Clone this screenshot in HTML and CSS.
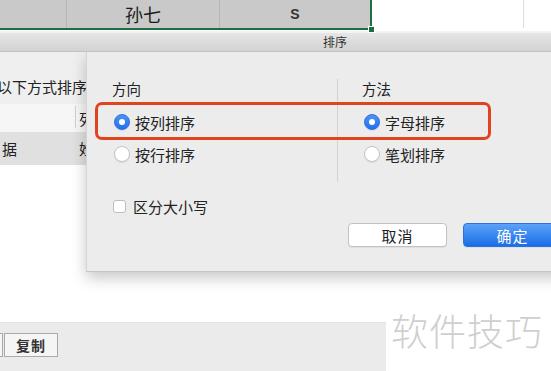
FILE: index.html
```html
<!DOCTYPE html>
<html lang="zh-CN">
<head>
  <meta charset="UTF-8">
  <title>排序</title>
  <link rel="stylesheet" href="styles.css">
</head>
<body>
  <div class="screen">
    <div class="sheet-row">
      <div class="selection">
        <div class="cell cell-a"></div>
        <div class="cell cell-b">孙七</div>
        <div class="cell cell-c">S</div>
        <span class="fill-handle"></span>
      </div>
      <div class="cell cell-d"></div>
      <div class="cell cell-e"></div>
    </div>
    <div class="strip"></div>
    <div class="titlebar">排序</div>

    <div class="window">
      <!-- Underlying Word dialog, mostly hidden by the sheet -->
      <div class="backdrop">
        <div class="prompt">以下方式排序文字</div>
        <div class="list-head">
          <div class="list-cell first"></div>
          <div class="list-cell">列</div>
        </div>
        <div class="list-row">
          <div class="list-cell first">据</div>
          <div class="list-cell">姓</div>
        </div>
        <div class="blank"></div>
        <div class="bottom-bar">
          <button class="small-btn prev"></button>
          <button class="small-btn">复制</button>
        </div>
      </div>

      <div class="sort-sheet">
        <div class="options">
          <div class="group group-left">
            <div class="group-title">方向</div>
            <label class="radio-row"><span class="radio checked"></span>按列排序</label>
            <label class="radio-row"><span class="radio"></span>按行排序</label>
          </div>
          <div class="group group-right">
            <div class="group-title">方法</div>
            <label class="radio-row"><span class="radio checked"></span>字母排序</label>
            <label class="radio-row"><span class="radio"></span>笔划排序</label>
          </div>
        </div>
        <label class="check-row"><span class="checkbox"></span>区分大小写</label>
        <div class="actions">
          <button class="btn">取消</button>
          <button class="btn primary">确定</button>
        </div>
        <div class="highlight"></div>
      </div>

      <div class="watermark">软件技巧</div>
    </div>
  </div>
</body>
</html>
```

FILE: styles.css
```css
:root {
  --text-color: #222222;
  --excel-green: #1f6e41;
  --sheet-gray: #c9c9c9;
  --panel-bg: #ececec;
  --blue: #2f7bf2;
  --red-mark: #e0441f;
}

* {
  margin: 0;
  padding: 0;
  box-sizing: border-box;
}

body {
  width: 551px;
  height: 371px;
  overflow: hidden;
  background-color: #ffffff;
  color: var(--text-color);
  font-family: "Noto Sans CJK SC", "Noto Sans", sans-serif;
}

.screen {
  width: 551px;
  height: 371px;
  display: flex;
  flex-direction: column;
}

/* Spreadsheet row */
.sheet-row {
  height: 30px;
  display: flex;
  flex-shrink: 0;
}

.selection {
  position: relative;
  display: flex;
  background-color: var(--sheet-gray);
  border-right: 2px solid var(--excel-green);
  border-bottom: 2px solid var(--excel-green);
}

.cell {
  height: 28px;
  display: flex;
  align-items: center;
  justify-content: center;
  border-right: 1px solid #b5b5b5;
}

.cell-a {
  width: 67px;
}

.cell-b {
  width: 153px;
  font-size: 18px;
  color: #1a1a1a;
}

.cell-c {
  width: 150px;
  border-right: none;
  font-family: "Liberation Sans", sans-serif;
  font-size: 14px;
  font-weight: bold;
  color: #333333;
}

.cell-d {
  width: 152px;
  border-right: 1px solid #dedede;
  background-color: #ffffff;
}

.cell-e {
  flex: 1;
  border-right: none;
}

.fill-handle {
  position: absolute;
  right: -5px;
  bottom: -5px;
  width: 7px;
  height: 7px;
  background-color: var(--excel-green);
  border: 1px solid #ffffff;
}

.strip {
  height: 3px;
  flex-shrink: 0;
  background-color: #f3f3f3;
  border-top: 1px solid #ffffff;
}

.titlebar {
  height: 19px;
  flex-shrink: 0;
  background: linear-gradient(#e6e6e6, #d2d2d2);
  border-bottom: 1px solid #c2c2c2;
  font-size: 12px;
  line-height: 18px;
  text-align: center;
  padding-left: 119px;
  color: #333333;
}

/* Window under the title bar */
.window {
  position: relative;
  flex: 1;
  overflow: hidden;
}

.backdrop {
  height: 100%;
  display: flex;
  flex-direction: column;
}

.prompt {
  height: 52px;
  background-color: #efefef;
  font-size: 15px;
  line-height: 20px;
  padding-top: 25px;
  margin-left: -3px;
  white-space: nowrap;
}

.list-head,
.list-row {
  display: flex;
  font-size: 15px;
}

.list-head {
  height: 28px;
  background-color: #f6f6f6;
}

.list-row {
  height: 33px;
  background-color: #e0e0e0;
}

.list-cell {
  display: flex;
  align-items: center;
  padding-left: 3px;
}

.list-cell.first {
  width: 76px;
  padding-left: 2px;
}

.list-head .list-cell.first {
  margin: 2px 0 4px;
  border-right: 1px solid #d0d0d0;
}

.blank {
  flex: 1;
  background-color: #ffffff;
}

.bottom-bar {
  height: 49px;
  width: 386px;
  background-color: #ebebeb;
  border-top: 1px solid #e2e2e2;
  display: flex;
  align-items: flex-start;
  padding-top: 10px;
  gap: 1px;
}

.small-btn {
  height: 24px;
  padding: 0 11px;
  background-color: #f5f5f5;
  border: 1px solid #a9a9a9;
  font-family: "Noto Sans CJK SC", sans-serif;
  font-size: 14px;
  font-weight: bold;
  color: #333333;
  letter-spacing: 1px;
}

.small-btn.prev {
  width: 3px;
  padding: 0;
  border-left: none;
}

/* Sort sheet */
.sort-sheet {
  position: absolute;
  left: 86px;
  top: 0;
  width: 500px;
  background-color: var(--panel-bg);
  border-left: 1px solid #d4d4d4;
  border-bottom: 1px solid #c4c4c4;
  box-shadow: 0 6px 14px rgba(0, 0, 0, 0.22);
  padding: 27px 0 24px 25px;
}

.options {
  display: flex;
}

.group {
  padding-bottom: 12px;
}

.group-left {
  width: 226px;
  border-right: 1px solid #d2d2d2;
}

.group-right {
  padding-left: 24px;
}

.group-title {
  font-size: 14.5px;
  line-height: 20px;
  margin-bottom: 7px;
}

.radio-row {
  height: 32px;
  display: flex;
  align-items: center;
  gap: 5px;
  font-size: 15px;
  padding-left: 2px;
}

.radio {
  width: 16px;
  height: 16px;
  border-radius: 50%;
  background-color: #ffffff;
  border: 1px solid #c4c4c4;
  box-shadow: 0 1px 1px rgba(0, 0, 0, 0.08);
  display: flex;
  align-items: center;
  justify-content: center;
}

.radio.checked {
  background: linear-gradient(#4b93f7, #2370ec);
  border-color: #2a6fdc;
}

.radio.checked::after {
  content: "";
  width: 6px;
  height: 6px;
  border-radius: 50%;
  background-color: #ffffff;
}

.check-row {
  height: 20px;
  margin-top: 14px;
  display: flex;
  align-items: center;
  gap: 7px;
  font-size: 15px;
}

.checkbox {
  width: 13px;
  height: 13px;
  margin-left: 1px;
  border-radius: 3px;
  background-color: #ffffff;
  border: 1px solid #bdbdbd;
}

.actions {
  display: flex;
  gap: 16px;
  margin-top: 7px;
  padding-left: 236px;
}

.btn {
  width: 99px;
  height: 24px;
  border-radius: 4px;
  border: 1px solid #c2c2c2;
  background-color: #ffffff;
  font-family: "Noto Sans CJK SC", sans-serif;
  font-size: 15px;
  color: #222222;
  letter-spacing: 1px;
  box-shadow: 0 1px 1px rgba(0, 0, 0, 0.06);
}

.btn.primary {
  background: linear-gradient(#5ba3f9, #1a6de6);
  border-color: #2a72e0;
  color: #ffffff;
}

/* Red annotation box */
.highlight {
  position: absolute;
  left: 8px;
  top: 50px;
  width: 396px;
  height: 38px;
  border: 3px solid var(--red-mark);
  border-radius: 7px;
}

.watermark {
  position: absolute;
  left: 391px;
  top: 251px;
  font-size: 37px;
  font-weight: 300;
  color: #cfcfcf;
  letter-spacing: 1px;
  white-space: nowrap;
}
```
